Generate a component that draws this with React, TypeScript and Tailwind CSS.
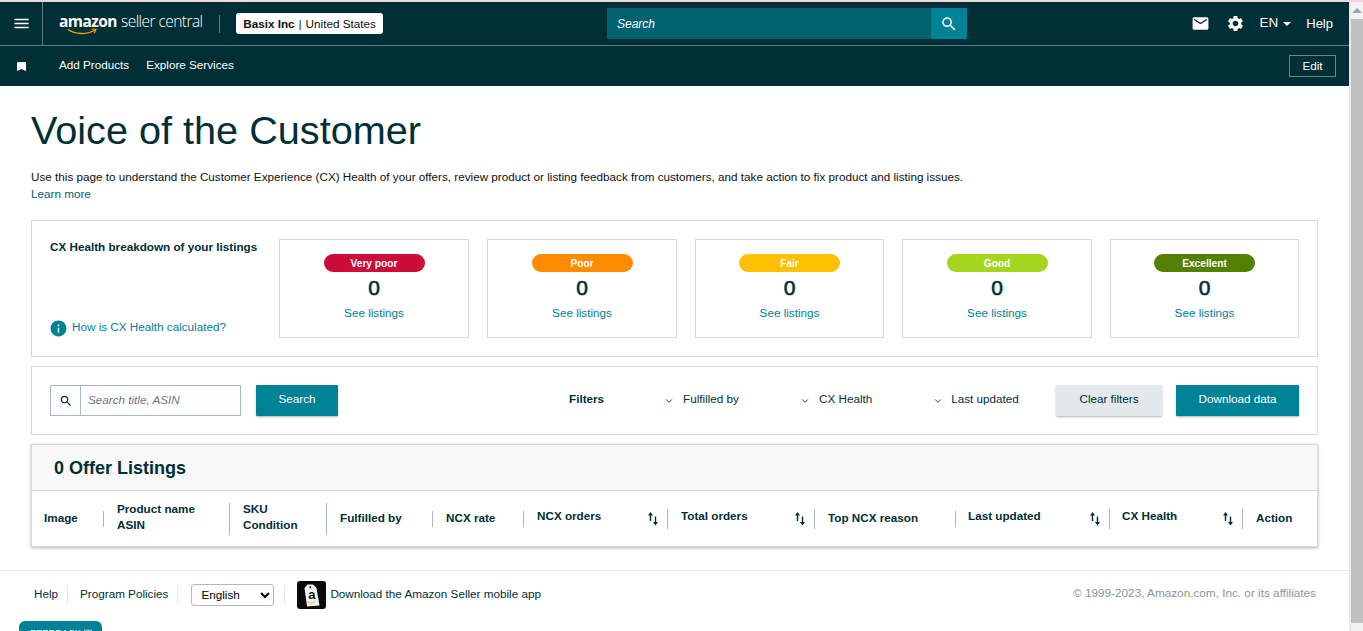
import { ChevronDown } from "lucide-react";
import type { ReactNode } from "react";

const font = "font-['Liberation_Sans',Arial,sans-serif]";

const healthCards = [
  { label: "Very poor", color: "bg-[#cc0c39]", width: "w-[190px]" },
  { label: "Poor", color: "bg-[#ff8c00]", width: "w-[190px]" },
  { label: "Fair", color: "bg-[#ffc000]", width: "w-[189px]" },
  { label: "Good", color: "bg-[#a5d61d]", width: "w-[190px]" },
  { label: "Excellent", color: "bg-[#538000]", width: "w-[189px]" },
];

const MaterialIcon = ({ d, size, className }: { d: string; size: number; className?: string }) => (
  <svg width={size} height={size} viewBox="0 0 24 24" fill="currentColor" className={`shrink-0 ${className ?? ""}`}>
    <path d={d} />
  </svg>
);

const icons = {
  menu: "M3 18h18v-2H3v2zm0-5h18v-2H3v2zm0-7v2h18V6H3z",
  search:
    "M15.5 14h-.79l-.28-.27C15.41 12.59 16 11.11 16 9.5 16 5.91 13.09 3 9.5 3S3 5.91 3 9.5 5.91 16 9.5 16c1.61 0 3.09-.59 4.23-1.57l.27.28v.79l5 4.99L20.49 19l-4.99-5zm-6 0C7.01 14 5 11.99 5 9.5S7.01 5 9.5 5 14 7.01 14 9.5 11.99 14 9.5 14z",
  mail: "M20 4H4c-1.1 0-1.99.9-1.99 2L2 18c0 1.1.9 2 2 2h16c1.1 0 2-.9 2-2V6c0-1.1-.9-2-2-2zm0 4l-8 5-8-5V6l8 5 8-5v2z",
  settings:
    "M19.14 12.94c.04-.3.06-.61.06-.94 0-.32-.02-.64-.07-.94l2.03-1.58c.18-.14.23-.41.12-.61l-1.92-3.32c-.12-.22-.37-.29-.59-.22l-2.39.96c-.5-.38-1.03-.7-1.62-.94l-.36-2.54c-.04-.24-.24-.41-.48-.41h-3.84c-.24 0-.43.17-.47.41l-.36 2.54c-.59.24-1.13.57-1.62.94l-2.39-.96c-.22-.08-.47 0-.59.22L2.74 8.87c-.12.21-.08.47.12.61l2.03 1.58c-.05.3-.09.63-.09.94s.02.64.07.94l-2.03 1.58c-.18.14-.23.41-.12.61l1.92 3.32c.12.22.37.29.59.22l2.39-.96c.5.38 1.03.7 1.62.94l.36 2.54c.05.24.24.41.48.41h3.84c.24 0 .44-.17.47-.41l.36-2.54c.59-.24 1.13-.56 1.62-.94l2.39.96c.22.08.47 0 .59-.22l1.92-3.32c.12-.22.07-.47-.12-.61l-2.01-1.58zM12 15.6c-1.98 0-3.6-1.62-3.6-3.6s1.62-3.6 3.6-3.6 3.6 1.62 3.6 3.6-1.62 3.6-3.6 3.6z",
  info: "M12 2C6.48 2 2 6.48 2 12s4.48 10 10 10 10-4.48 10-10S17.52 2 12 2zm1 15h-2v-6h2v6zm0-8h-2V7h2v2z",
};

const SortIcon = () => (
  <svg width="10" height="14" viewBox="0 0 10 14" className="shrink-0 text-[#002f36]" fill="currentColor">
    <path d="M2.5 0 L5 3.5 H3.2 V9 H1.8 V3.5 H0 Z" />
    <path d="M7.5 13.5 L5 10 H6.8 V4.5 H8.2 V10 H10 Z" />
  </svg>
);

const Divider = ({ className }: { className: string }) => <div className={`w-px shrink-0 bg-[#a9b9bb] ${className}`} />;

const HeaderCell = ({ width, children, sort, twoLine, pad = "pl-[13px]" }: { width: string; children: ReactNode; sort?: boolean; twoLine?: boolean; pad?: string }) => (
  <div className={`flex items-center justify-between ${width} ${pad} ${sort ? "pr-[9px]" : ""}`}>
    <div className={`text-[11.7px] font-bold leading-4 text-[#002f36] ${sort ? "-mt-1.5" : twoLine ? "-mt-1" : "-mt-0.5"}`}>{children}</div>
    {sort && <SortIcon />}
  </div>
);

export default function App() {
  return (
    <div className={`flex h-[631px] w-[1363px] flex-col overflow-hidden bg-white ${font}`}>
      <div className="h-0.5 shrink-0 bg-[#f3d6dc]" />
      <div className="flex min-h-0 flex-1">
        <div className="flex w-[1349px] flex-col">
          <header className="shrink-0 bg-[#002f36] text-white">
            <div className="flex h-[44px] items-center border-b border-[#5d7a7e]">
              <div className="flex h-full w-[43px] items-center justify-center border-r border-[#5d7a7e]">
                <MaterialIcon d={icons.menu} size={19} />
              </div>
              <div className="mb-1.5 ml-[16px] flex w-[160px] flex-col">
                <div className="relative flex items-baseline whitespace-nowrap font-['Open_Sans',sans-serif] text-[15.5px] leading-5 tracking-[-0.55px]">
                  <span className="font-bold">amazon</span>
                  <span className="ml-1 font-light">seller central</span>
                  <svg width="30" height="8" viewBox="0 0 30 8" className="absolute left-[8px] top-[17px]" fill="none">
                    <path d="M1 1.5 C8 6.5 20 7 28 2" stroke="#f90" strokeWidth="1.4" />
                    <path d="M24.5 1 L29 1.2 L27.5 5" stroke="#f90" strokeWidth="1.2" />
                  </svg>
                </div>
              </div>
              <div className="h-[18px] w-px bg-[#5d7a7e]" />
              <div className="ml-4 flex h-[21px] w-[147px] items-center justify-center rounded-[3px] bg-white text-[11.7px] text-[#0f1111]">
                <span className="font-bold">Basix Inc</span>
                <span className="mx-1 text-[#002f36]">|</span>
                <span>United States</span>
              </div>
              <div className="ml-[224px] flex h-[31px] w-[360px]">
                <div className="flex flex-1 items-center bg-[#00626f] pl-2.5 text-[12px] italic text-white">Search</div>
                <div className="flex w-9 items-center justify-center bg-[#008296]">
                  <MaterialIcon d={icons.search} size={18} />
                </div>
              </div>
              <div className="ml-auto flex items-center pr-[16px] text-[13.5px]">
                <MaterialIcon d={icons.mail} size={19} />
                <MaterialIcon d={icons.settings} size={19} className="ml-[16px]" />
                <span className="ml-[14px]">EN</span>
                <span className="ml-[5px] h-0 w-0 border-x-4 border-t-4 border-x-transparent border-t-white" />
                <span className="ml-[15px] text-[13px]">Help</span>
              </div>
            </div>
            <div className="flex h-[40px] items-center">
              <svg width="9" height="9" viewBox="0 0 9 9" className="ml-[17px] shrink-0" fill="white">
                <path d="M1 0h7a1 1 0 0 1 1 1v8L4.5 7 0 9V1a1 1 0 0 1 1-1z" />
              </svg>
              <span className="mb-[2px] ml-[33px] text-[11.7px]">Add Products</span>
              <span className="mb-[2px] ml-[17px] text-[11.7px]">Explore Services</span>
              <div className="ml-auto mr-[13px] flex h-[22px] w-[47px] items-center justify-center border border-[#6d8689] pb-px text-[11.7px]">Edit</div>
            </div>
          </header>

          <main className="flex-1 px-[31px] text-[#002f36]">
            <h1 className="mt-[20px] text-[39.65px] leading-[48px]">Voice of the Customer</h1>
            <p className="mt-[14px] text-[11.7px] leading-[17px] text-[#0f1111]">
              Use this page to understand the Customer Experience (CX) Health of your offers, review product or listing feedback from customers, and take action to fix product and listing issues.
            </p>
            <a className="block text-[11.7px] leading-[17px] text-[#00626f]">Learn more</a>

            <section className="mt-[18px] flex h-[137px] w-[1287px] border border-[#d5dbdb] py-[18px] pl-[18px] pr-[18px]">
              <div className="flex w-[229px] shrink-0 flex-col justify-between">
                <div className="text-[11.7px] font-bold leading-4 text-[#002f36]">CX Health breakdown of your listings</div>
                <div className="flex items-center text-[11.7px] text-[#008296]">
                  <MaterialIcon d={icons.info} size={19} className="-ml-px" />
                  <span className="mb-[2px] ml-1">How is CX Health calculated?</span>
                </div>
              </div>
              <div className="flex flex-1 gap-[18px]">
                {healthCards.map((card) => (
                  <div key={card.label} className={`flex flex-col items-center border border-[#d5dbdb] pt-[14px] ${card.width}`}>
                    <div className={`flex h-[18px] w-[101px] items-center justify-center rounded-full pt-px text-[10.2px] font-bold text-white ${card.color}`}>{card.label}</div>
                    <div className="mt-[2px] text-[21px] leading-[28px] text-[#002f36] [-webkit-text-stroke:0.6px_#002f36]">0</div>
                    <div className="mt-[3px] text-[11.7px] leading-4 text-[#008296]">See listings</div>
                  </div>
                ))}
              </div>
            </section>

            <section className="mt-[9px] flex h-[69px] w-[1287px] items-center border border-[#d5dbdb] pl-[18px] pr-[18px] text-[11.7px]">
              <div className="flex h-[31px] w-[191px] border border-[#a9b9bb]">
                <div className="flex w-[30px] items-center justify-center border-r border-[#a9b9bb]">
                  <MaterialIcon d={icons.search} size={14} />
                </div>
                <div className="flex flex-1 items-center pb-[2px] pl-[7px] italic text-[#6c7778]">Search title, ASIN</div>
              </div>
              <button className="ml-[15px] h-[31px] w-[82px] rounded-[1px] bg-[#008296] pb-[3px] text-white shadow-[0_1px_2px_rgba(0,0,0,0.3)]">Search</button>
              <span className="mb-[3px] ml-[231px] font-bold">Filters</span>
              <ChevronDown size={10} className="ml-[60px]" />
              <span className="mb-[3px] ml-[9px]">Fulfilled by</span>
              <ChevronDown size={10} className="ml-[61px]" />
              <span className="mb-[3px] ml-[9px]">CX Health</span>
              <ChevronDown size={10} className="ml-[61px]" />
              <span className="mb-[3px] ml-[8px]">Last updated</span>
              <button className="ml-auto h-[31px] w-[106px] rounded-[1px] bg-[#e3e9ea] pb-[3px] shadow-[0_1px_2px_rgba(0,0,0,0.3)]">Clear filters</button>
              <button className="ml-[14px] h-[31px] w-[123px] rounded-[1px] bg-[#008296] pb-[3px] text-white shadow-[0_1px_2px_rgba(0,0,0,0.3)]">Download data</button>
            </section>

            <section className="mt-[9px] h-[103px] w-[1287px] border border-[#d5dbdb] shadow-[0_1px_3px_rgba(0,0,0,0.3)]">
              <div className="flex h-[46px] items-center border-b border-[#d5dbdb] bg-[#f8f8f8] pl-[22px] pt-px text-[18px] font-bold">0 Offer Listings</div>
              <div className="flex h-[55px] items-center">
                <HeaderCell width="w-[71px]" pad="pl-3">Image</HeaderCell>
                <Divider className="h-4" />
                <HeaderCell width="w-[125px]" twoLine>Product name<br />ASIN</HeaderCell>
                <Divider className="h-8" />
                <HeaderCell width="w-[96px]" twoLine>SKU<br />Condition</HeaderCell>
                <Divider className="h-8" />
                <HeaderCell width="w-[105px]">Fulfilled by</HeaderCell>
                <Divider className="h-4" />
                <HeaderCell width="w-[90px]">NCX rate</HeaderCell>
                <Divider className="h-4" />
                <HeaderCell width="w-[143px]" sort>NCX orders</HeaderCell>
                <Divider className="h-5" />
                <HeaderCell width="w-[146px]" sort>Total orders</HeaderCell>
                <Divider className="h-5" />
                <HeaderCell width="w-[140px]">Top NCX reason</HeaderCell>
                <Divider className="h-4" />
                <HeaderCell width="w-[153px]" pad="pl-3" sort>Last updated</HeaderCell>
                <Divider className="h-5" />
                <HeaderCell width="w-[132px]" pad="pl-3" sort>CX Health</HeaderCell>
                <Divider className="h-5" />
                <HeaderCell width="w-[72px]">Action</HeaderCell>
              </div>
            </section>
          </main>

          <footer className="relative h-[61px] shrink-0 border-t border-[#e7e7e7] text-[11.7px] text-[#002f36]">
            <div className="flex h-[47px] items-center pl-[34px]">
              <span className="mb-[2px]">Help</span>
              <div className="mx-[9px] h-[18px] w-px bg-[#e7e7e7]" />
              <span className="mb-[2px] ml-[3px]">Program Policies</span>
              <div className="mx-[9px] h-[18px] w-px bg-[#e7e7e7]" />
              <select className="ml-[4px] h-[22px] w-[83px] rounded-[3px] border border-[#b7b7b7] pl-[5px] text-[11.7px] text-black">
                <option>English</option>
              </select>
              <div className="ml-[10px] mr-[9px] h-[18px] w-px bg-[#e7e7e7]" />
              <svg width="29" height="28" viewBox="0 0 29 28" className="ml-[3px] shrink-0">
                <rect width="29" height="28" rx="3" fill="#0a0a0a" />
                <path d="M10.5 3.5 H16 L19.5 7 L22.5 24.5 L10 25.5 L7.5 7 Z" fill="#f4f4f4" />
                <circle cx="13.3" cy="6.2" r="1" fill="#0a0a0a" />
                <text x="14.8" y="18" fontSize="13" fontWeight="700" fill="#111" textAnchor="middle">a</text>
                <path d="M10.5 20.5 C13 22.5 16 22.5 18.5 20" stroke="#f90" strokeWidth="1" fill="none" />
              </svg>
              <span className="mb-[2px] ml-[4px]">Download the Amazon Seller mobile app</span>
              <span className="mb-[3px] ml-auto pr-[33px] text-[11.75px] text-[#8b9697]">© 1999-2023, Amazon.com, Inc. or its affiliates</span>
            </div>
            <div className="absolute left-[19px] top-[50px] flex h-[20px] w-[83px] items-start rounded-t-[6px] bg-[#008296] pl-[11px] pt-[6px] text-[9.5px] leading-3 text-white">
              <span>FEEDBACK</span>
              <svg width="8" height="5" viewBox="0 0 8 5" className="ml-[3px] mt-[2px]" fill="none" stroke="white" strokeWidth="1">
                <path d="M0.5 0.5 L2 3 L3.5 0.5" />
                <path d="M4.5 0.5 L6 3 L7.5 0.5" />
              </svg>
            </div>
          </footer>
        </div>

        <div className="flex w-[14px] shrink-0 flex-col border-l-2 border-[#e8e8e8] bg-[#f1f1f1]">
          <div className="flex h-[17px] items-center justify-center">
            <span className="h-0 w-0 border-x-[5px] border-b-[5px] border-x-transparent border-b-[#a3a3a3]" />
          </div>
          <div className="h-[604px] bg-[#c1c1c1]" />
        </div>
      </div>
    </div>
  );
}
